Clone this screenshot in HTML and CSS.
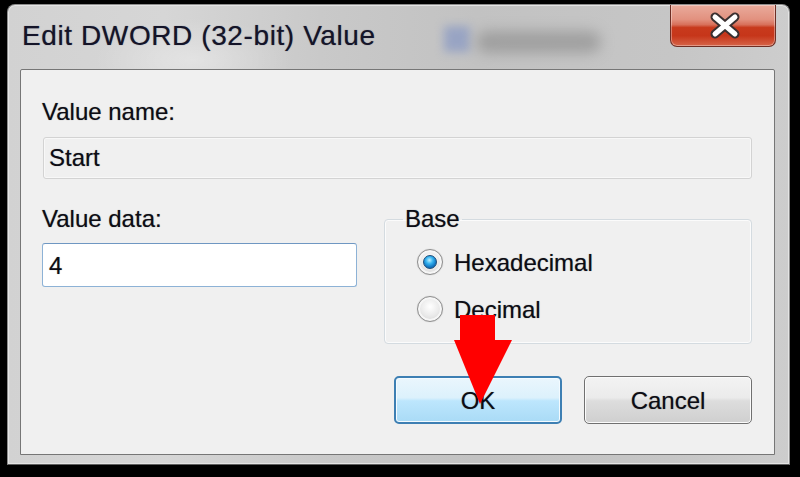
FILE: index.html
```html
<!DOCTYPE html>
<html>
<head>
<meta charset="utf-8">
<link rel="stylesheet" href="styles.css">
</head>
<body>
<div class="window">
  <div class="titlebar">
    <span class="title">Edit DWORD (32-bit) Value</span>
    <div class="ghost" aria-hidden="true"><span class="ghost-icon"></span><span class="ghost-text"></span></div>
    <div class="close">
      <svg width="106" height="42" viewBox="0 0 106 42">
        <path d="M45 13 L65 30 M65 13 L45 30" stroke="#3b3030" stroke-width="9" stroke-linecap="round" fill="none"/>
        <path d="M45 13 L65 30 M65 13 L45 30" stroke="#ffffff" stroke-width="5" stroke-linecap="round" fill="none"/>
      </svg>
    </div>
  </div>
  <div class="client">
    <div class="label">Value name:</div>
    <div class="namebox">Start</div>
    <div class="row">
      <div class="datacol">
        <div class="label">Value data:</div>
        <div class="databox">4</div>
      </div>
      <fieldset class="base">
        <legend>Base</legend>
        <div class="opt first"><span class="radio checked"></span>Hexadecimal</div>
        <div class="opt second"><span class="radio"></span>Decimal</div>
      </fieldset>
    </div>
    <div class="buttons">
      <div class="btn ok">OK</div>
      <div class="btn cancel">Cancel</div>
    </div>
  </div>
  <svg class="arrow" width="62" height="92" viewBox="0 0 62 92">
    <polygon points="6,0 41,0 41,25 58,25 26,89 0,25 6,25" fill="#ff0000"/>
  </svg>
</div>
</body>
</html>
```

FILE: styles.css
```css
html, body {
  margin: 0;
  padding: 0;
}
body {
  width: 800px;
  height: 477px;
  overflow: hidden;
  background: #000;
  font-family: "Liberation Sans", Arial, sans-serif;
  font-size: 24px;
  color: #0c0c14;
}
.window {
  position: relative;
  box-sizing: border-box;
  width: 783px;
  height: 461px;
  margin: 4px 0 0 7px;
  border: 1px solid #8c8c8c;
  border-bottom-color: #5e5e5e;
  border-radius: 8px 8px 0 0;
  box-shadow: inset 0 0 0 1px #e4e4e4;
  background:
    radial-gradient(ellipse 140px 60px at 185px 55px, rgba(255,255,255,0.35), rgba(255,255,255,0) 70%),
    linear-gradient(to right, #d2d2d2 0%, #d6d6d6 20%, #c9c9c9 40%, #c2c2c2 60%, #c6c6c6 85%, #cdcdcd 100%);
}
.titlebar {
  display: flex;
  align-items: flex-start;
  height: 64px;
}
.title {
  margin: 15px 0 0 14px;
  font-size: 28px;
  line-height: 32px;
  letter-spacing: 0.6px;
  color: #141428;
  white-space: nowrap;
  text-shadow: 0 0 1px rgba(20, 20, 60, 0.55);
}
.ghost {
  display: flex;
  align-items: center;
  gap: 6px;
  margin: 20px 0 0 68px;
  opacity: 0.5;
}
.ghost-icon {
  width: 26px;
  height: 26px;
  background: #6f86c4;
  filter: blur(5px);
}
.ghost-text {
  width: 125px;
  height: 22px;
  margin-top: 6px;
  background: #7c7c7c;
  border-radius: 11px;
  filter: blur(7px);
}
.close {
  margin-left: auto;
  margin-right: 13px;
  width: 106px;
  height: 42px;
  box-sizing: border-box;
  border: 1px solid #6e2e24;
  border-top: none;
  border-radius: 0 0 7px 7px;
  background: linear-gradient(to bottom, #e9ab9c 0%, #e2917f 35%, #d8705a 48%, #c83a1d 55%, #c6361a 75%, #d66448 100%);
  box-shadow: inset 0 0 0 1px rgba(255,255,255,0.35);
  overflow: hidden;
}
.close svg {
  display: block;
  margin: -1px 0 0 -1px;
}
.client {
  box-sizing: border-box;
  height: 386px;
  margin: 0 14px 0 12px;
  padding: 28px 22px 0 21px;
  background: #f0f0f0;
  border: 1px solid #767676;
  border-radius: 2px 2px 0 0;
  text-shadow: 0 0 1px rgba(0, 0, 0, 0.45);
}
.label {
  line-height: 28px;
  white-space: nowrap;
}
.namebox {
  box-sizing: border-box;
  height: 42px;
  margin: 11px 0 0 1px;
  padding-left: 5px;
  line-height: 40px;
  border: 1px solid #d3d3d3;
  border-radius: 3px;
  box-shadow: inset 0 0 0 1px #f8f8f8;
  background: #f0f0f0;
}
.row {
  display: flex;
  align-items: flex-start;
  margin-top: 26px;
}
.datacol {
  width: 316px;
}
.databox {
  box-sizing: border-box;
  width: 315px;
  height: 44px;
  margin-top: 10px;
  padding: 2px 0 0 6px;
  line-height: 40px;
  border: 1px solid #8db2d6;
  border-top-color: #6f97c2;
  border-radius: 3px;
  background: #fff;
}
.base {
  box-sizing: border-box;
  width: 368px;
  margin: 0 0 0 auto;
  padding: 0 18px 18px 18px;
  border: 1px solid #d4dbe0;
  border-radius: 4px;
  box-shadow: inset 0 0 0 1px #fbfbfb;
  min-inline-size: 0;
}
.base legend {
  padding: 0 2px;
  line-height: 28px;
}
.opt {
  display: flex;
  align-items: center;
  height: 30px;
  margin-left: 15px;
  white-space: nowrap;
}
.opt.first {
  margin-top: 15px;
}
.opt.second {
  margin-top: 17px;
}
.radio {
  position: relative;
  box-sizing: border-box;
  width: 26px;
  height: 26px;
  margin: 0 11px 3px -1px;
  border-radius: 50%;
  border: 1px solid #8d8d8d;
  background: radial-gradient(circle at 50% 40%, #ffffff 0%, #ececec 45%, #cfcfcf 100%);
  box-shadow: inset 0 0 0 2px #f6f6f6, 0 0 1px #bbb;
}
.radio.checked::after {
  content: "";
  position: absolute;
  left: 5px;
  top: 5px;
  width: 14px;
  height: 14px;
  box-sizing: border-box;
  border-radius: 50%;
  border: 1px solid #1c4c78;
  background: radial-gradient(circle at 45% 35%, #bdefff 0%, #34b2ef 35%, #1378c4 65%, #0b4f8a 100%);
}
.buttons {
  display: flex;
  justify-content: flex-end;
  gap: 22px;
  margin-top: 32px;
}
.btn {
  box-sizing: border-box;
  width: 168px;
  height: 48px;
  padding-top: 2px;
  line-height: 44px;
  text-align: center;
  border-radius: 5px;
}
.ok {
  border: 2px solid #3d7fb3;
  line-height: 42px;
  background: linear-gradient(to bottom, #eaf6fd 0%, #dcf1fc 45%, #bde6fd 52%, #a9dbf6 100%);
  box-shadow: inset 0 0 0 1px #f4fbff;
}
.cancel {
  border: 1px solid #707070;
  background: linear-gradient(to bottom, #f3f3f3 0%, #ebebeb 45%, #dddddd 52%, #cfcfcf 100%);
  box-shadow: inset 0 0 0 1px #fbfbfb;
}
.arrow {
  position: absolute;
  left: 446px;
  top: 310px;
}
```
